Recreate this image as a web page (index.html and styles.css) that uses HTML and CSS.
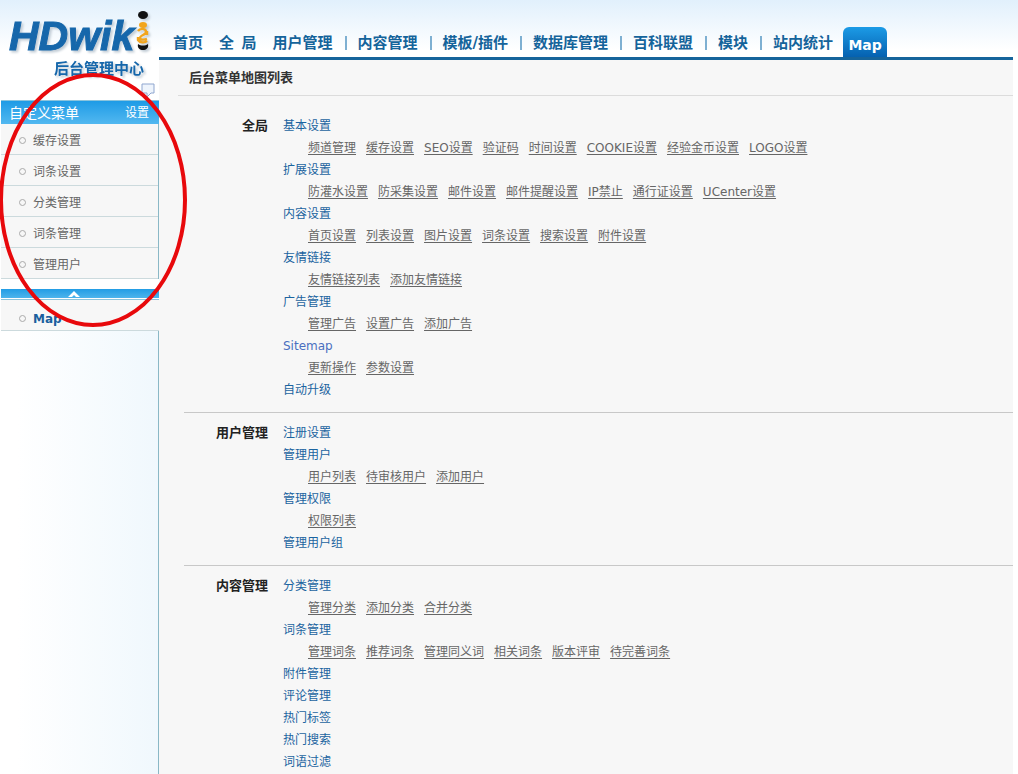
FILE: index.html
```html
<!doctype html>
<html lang="zh-CN">

<head>
    <meta charset="utf-8">
    <meta name="viewport" content="width=device-width, initial-scale=1">
    <title>HDwiki 后台管理中心</title>
    <link rel="stylesheet" href="styles.css">
</head>

<body>
<div class="page">
    <aside class="sidebar">
        <div class="logo">
            <svg width="157" height="100" viewBox="0 0 157 100" role="img" aria-label="HDwiki 后台管理中心">
                <g class="logo-text">
                    <text class="logo-name" x="8" y="50">HDwik</text>
                    <text class="logo-sub" x="53" y="74">后台管理中心</text>
                </g>
                <g class="logo-text">
                    <ellipse cx="142" cy="15" rx="5" ry="4" fill="#111"/>
                    <ellipse cx="142" cy="25" rx="4" ry="3" fill="#f2a51d"/>
                    <path d="M137 31c2-3 8-3 8 1 0 3-6 3-6 6 0 2 4 2 7 1M146 31v4M137 37v3c2 3 7 3 9 1" fill="none" stroke="#f2a51d" stroke-width="2.4"/>
                    <path d="M137 44c3 2 7 2 10 0 1 4-2 6-5 6s-6-2-5-6z" fill="#111"/>
                </g>
                <path d="M141 84h12v9h-3l-4 4v-4h-5z" fill="#eef4fc" stroke="#8fa6cf"/>
            </svg>
        </div>
        <div class="side-head">
            <span>自定义菜单</span>
            <a href="#">设置</a>
        </div>
        <ul class="side-menu">
            <li><a href="#">缓存设置</a></li>
            <li><a href="#">词条设置</a></li>
            <li><a href="#">分类管理</a></li>
            <li><a href="#">词条管理</a></li>
            <li><a href="#">管理用户</a></li>
        </ul>
        <button class="side-fold" type="button" aria-label="收起">
            <svg width="12" height="6" viewBox="0 0 12 6"><path d="M0 6l6-6 6 6H8L6 4 4 6z" fill="#fff"/></svg>
        </button>
        <ul class="side-menu current">
            <li><a href="#">Map</a></li>
        </ul>
        <div class="side-rest"></div>
    </aside>

    <div class="main">
        <nav class="topnav">
            <a class="plain" href="#">首页</a>
            <a class="plain" href="#">全&ensp;局</a>
            <a href="#">用户管理</a>
            <a href="#">内容管理</a>
            <a href="#">模板/插件</a>
            <a href="#">数据库管理</a>
            <a href="#">百科联盟</a>
            <a href="#">模块</a>
            <a class="last" href="#">站内统计</a>
            <a class="tab" href="#">Map</a>
        </nav>

        <div class="content">
            <h1>后台菜单地图列表</h1>

            <section class="group">
                <h2>全局</h2>
                <dl>
                    <dt><a href="#">基本设置</a></dt>
                    <dd><a href="#">频道管理</a><a href="#">缓存设置</a><a href="#">SEO设置</a><a href="#">验证码</a><a href="#">时间设置</a><a href="#">COOKIE设置</a><a href="#">经验金币设置</a><a href="#">LOGO设置</a></dd>
                    <dt><a href="#">扩展设置</a></dt>
                    <dd><a href="#">防灌水设置</a><a href="#">防采集设置</a><a href="#">邮件设置</a><a href="#">邮件提醒设置</a><a href="#">IP禁止</a><a href="#">通行证设置</a><a href="#">UCenter设置</a></dd>
                    <dt><a href="#">内容设置</a></dt>
                    <dd><a href="#">首页设置</a><a href="#">列表设置</a><a href="#">图片设置</a><a href="#">词条设置</a><a href="#">搜索设置</a><a href="#">附件设置</a></dd>
                    <dt><a href="#">友情链接</a></dt>
                    <dd><a href="#">友情链接列表</a><a href="#">添加友情链接</a></dd>
                    <dt><a href="#">广告管理</a></dt>
                    <dd><a href="#">管理广告</a><a href="#">设置广告</a><a href="#">添加广告</a></dd>
                    <dt><a class="en" href="#">Sitemap</a></dt>
                    <dd><a href="#">更新操作</a><a href="#">参数设置</a></dd>
                    <dt><a href="#">自动升级</a></dt>
                </dl>
            </section>

            <section class="group">
                <h2>用户管理</h2>
                <dl>
                    <dt><a href="#">注册设置</a></dt>
                    <dt><a href="#">管理用户</a></dt>
                    <dd><a href="#">用户列表</a><a href="#">待审核用户</a><a href="#">添加用户</a></dd>
                    <dt><a href="#">管理权限</a></dt>
                    <dd><a href="#">权限列表</a></dd>
                    <dt><a href="#">管理用户组</a></dt>
                </dl>
            </section>

            <section class="group">
                <h2>内容管理</h2>
                <dl>
                    <dt><a href="#">分类管理</a></dt>
                    <dd><a href="#">管理分类</a><a href="#">添加分类</a><a href="#">合并分类</a></dd>
                    <dt><a href="#">词条管理</a></dt>
                    <dd><a href="#">管理词条</a><a href="#">推荐词条</a><a href="#">管理同义词</a><a href="#">相关词条</a><a href="#">版本评审</a><a href="#">待完善词条</a></dd>
                    <dt><a href="#">附件管理</a></dt>
                    <dt><a href="#">评论管理</a></dt>
                    <dt><a href="#">热门标签</a></dt>
                    <dt><a href="#">热门搜索</a></dt>
                    <dt><a href="#">词语过滤</a></dt>
                </dl>
            </section>
        </div>
    </div>

    <!-- red circle round the custom menu -->
    <svg class="mark" width="188" height="254" viewBox="0 0 188 254" aria-hidden="true">
        <ellipse cx="93" cy="127" rx="92" ry="125" fill="none" stroke="#e8090c" stroke-width="4"/>
    </svg>
</div>
</body>

</html>
```

FILE: styles.css
```css
* {
    box-sizing: border-box;
}

body {
    margin: 0;
    background: #fff;
    color: #666;
    font: 12px/22px "DejaVu Sans", "Noto Sans CJK SC", sans-serif;
}

a {
    color: inherit;
    text-decoration: none;
}

ul, dl, dd, h1, h2 {
    margin: 0;
    padding: 0;
    list-style: none;
}

.page {
    position: relative;
    display: grid;
    grid-template-columns: 158px 1fr;
    min-height: 100vh;
    padding: 0 5px 0 1px;
    background: linear-gradient(#e1f0fc, #fff 50px) no-repeat;
}

/* left column */
.sidebar {
    display: flex;
    flex-direction: column;
}

.logo {
    height: 100px;
}

.logo svg {
    display: block;
}

.logo-name {
    font: italic bold 41px "Liberation Sans", sans-serif;
    fill: #1667ab;
    stroke: #1667ab;
    stroke-width: 1px;
}

.logo-sub {
    font: bold 15px "Noto Sans CJK SC", sans-serif;
    fill: #1667ab;
}

.logo-text {
    filter: drop-shadow(2px 2px 1px #c3cdd6);
}

.side-head {
    display: flex;
    justify-content: space-between;
    height: 24px;
    padding: 0 10px 0 8px;
    border-top: 1px solid #8cc4dc;
    background: linear-gradient(#1e9be6, #52b8f0);
    color: #fff;
    font-size: 14px;
    line-height: 24px;
}

.side-head a {
    font-size: 12px;
}

.side-menu {
    border-right: 1px solid #8ab8c6;
    background: #f7f7f7;
}

.side-menu li {
    height: 31px;
    border-bottom: 1px solid #ccdadd;
}

.side-menu a {
    display: flex;
    align-items: center;
    gap: 7px;
    height: 30px;
    padding: 3px 0 0 18px;
}

.side-menu a::before {
    content: "";
    box-sizing: border-box;
    width: 7px;
    height: 7px;
    border: 1px solid #aaa;
    border-radius: 50%;
}

.side-fold {
    display: flex;
    justify-content: center;
    align-items: center;
    height: 9px;
    margin: 10px 0 1px;
    padding: 0 12px 0 0;
    border: 0;
    background: linear-gradient(#229de5, #4db4ec);
}

.side-menu.current {
    border-top: 1px solid #8cc4dc;
    border-right: 0;
}

.current a {
    padding-top: 7px;
    color: #1b5f9e;
    font-weight: bold;
}

.side-rest {
    flex: 1;
    border-right: 1px solid #8ab8c6;
    background: linear-gradient(to right, #fff 10%, #f0f8fd);
}

/* top menu */
.topnav {
    display: flex;
    align-items: flex-end;
    height: 60px;
    padding-left: 14px;
    border-bottom: 3px solid #15649b;
    color: #15649b;
    font-size: 15px;
    font-weight: bold;
    white-space: nowrap;
}

.topnav a {
    display: flex;
    align-items: center;
    height: 28px;
}

.topnav a::after {
    content: "";
    width: 2px;
    height: 14px;
    margin: 0 11px 0 12px;
    background: #7fb0d2;
}

.topnav .plain {
    margin-right: 16px;
}

.topnav .last {
    margin-right: 10px;
}

.topnav .plain::after,
.topnav .last::after,
.topnav .tab::after {
    display: none;
}

.topnav .tab {
    justify-content: center;
    width: 44px;
    height: 30px;
    padding-top: 6px;
    border-radius: 6px 6px 0 0;
    background: linear-gradient(#1c9be6, #0561b0);
    color: #fff;
    font-size: 14px;
}

/* menu map */
.content {
    min-height: calc(100vh - 60px);
    background: #f7f7f7;
}

.content h1 {
    height: 36px;
    margin-left: 19px;
    padding-left: 11px;
    border-bottom: 1px solid #dcdcdc;
    color: #333;
    font-size: 13px;
    line-height: 36px;
}

.group {
    display: grid;
    grid-template-columns: 84px 1fr;
    gap: 15px;
    margin-left: 25px;
    padding: 9px 0 11px;
    border-bottom: 1px solid #c8c8c8;
}

.content h1 + .group {
    padding-top: 19px;
}

.group:last-child {
    padding-bottom: 0;
    border-bottom: 0;
}

.group h2 {
    color: #222;
    font-size: 13px;
    line-height: 22px;
    text-align: right;
}

.group dt {
    height: 22px;
    color: #1b64a0;
}

.group dt .en {
    color: #4a6fc0;
}

.group dd {
    display: flex;
    gap: 10px;
    height: 22px;
    padding-left: 25px;
}

.group dd a {
    text-decoration: underline;
    text-underline-offset: 2px;
}

/* lies over the left column */
.mark {
    position: absolute;
    top: 73px;
    left: 0;
}
```
